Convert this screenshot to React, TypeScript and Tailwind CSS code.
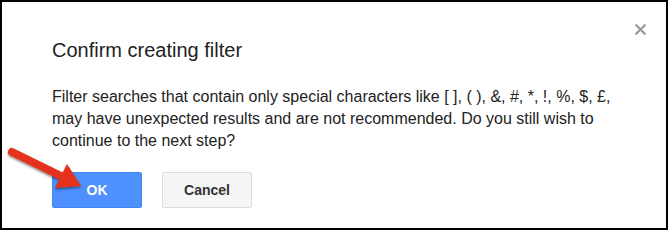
import { X } from 'lucide-react';

const RedArrow = () => (
  <svg
    className="absolute left-0 top-[140px] pointer-events-none"
    width="90"
    height="60"
    viewBox="0 140 90 60"
  >
    <defs>
      <filter id="arrow-shadow" x="-20%" y="-20%" width="140%" height="160%">
        <feDropShadow dx="0" dy="1.5" stdDeviation="1.2" floodColor="#000" floodOpacity="0.5" />
      </filter>
    </defs>
    <g filter="url(#arrow-shadow)">
      <line x1="10" y1="150" x2="62" y2="175.5" stroke="#e4311b" strokeWidth="8" strokeLinecap="round" />
      <polygon points="79,184 53,186 65,162" fill="#e4311b" />
    </g>
  </svg>
);

export default function App() {
  return (
    <div className="relative w-[668px] h-[230px] bg-white border-2 border-black font-['Liberation_Sans',Arial,sans-serif] text-[#222]">
      <button className="absolute left-[630px] top-[19px] text-[#9a9a9a]">
        <X className="w-[17px] h-[17px]" strokeWidth={3.2} />
      </button>

      <div className="pl-[50px] pr-[30px] pt-[36px]">
        <h1 className="text-[20px] leading-[24px]">Confirm creating filter</h1>
        <p className="mt-[24px] text-[16px] leading-[22px]">
          Filter searches that contain only special characters like [ ], ( ), &amp;, #, *, !, %, $, £,
          <br />
          may have unexpected results and are not recommended. Do you still wish to
          <br />
          continue to the next step?
        </p>

        <div className="flex gap-5 mt-[20px]">
          <button className="w-[90px] h-[36px] rounded-[2px] bg-[#4d90fe] border border-[#3f86f7] text-white text-[14px] font-bold">
            OK
          </button>
          <button className="w-[90px] h-[36px] rounded-[2px] bg-[#f5f5f5] border border-[#dcdcdc] text-[#333] text-[14px] font-bold">
            Cancel
          </button>
        </div>
      </div>

      <RedArrow />
    </div>
  );
}
